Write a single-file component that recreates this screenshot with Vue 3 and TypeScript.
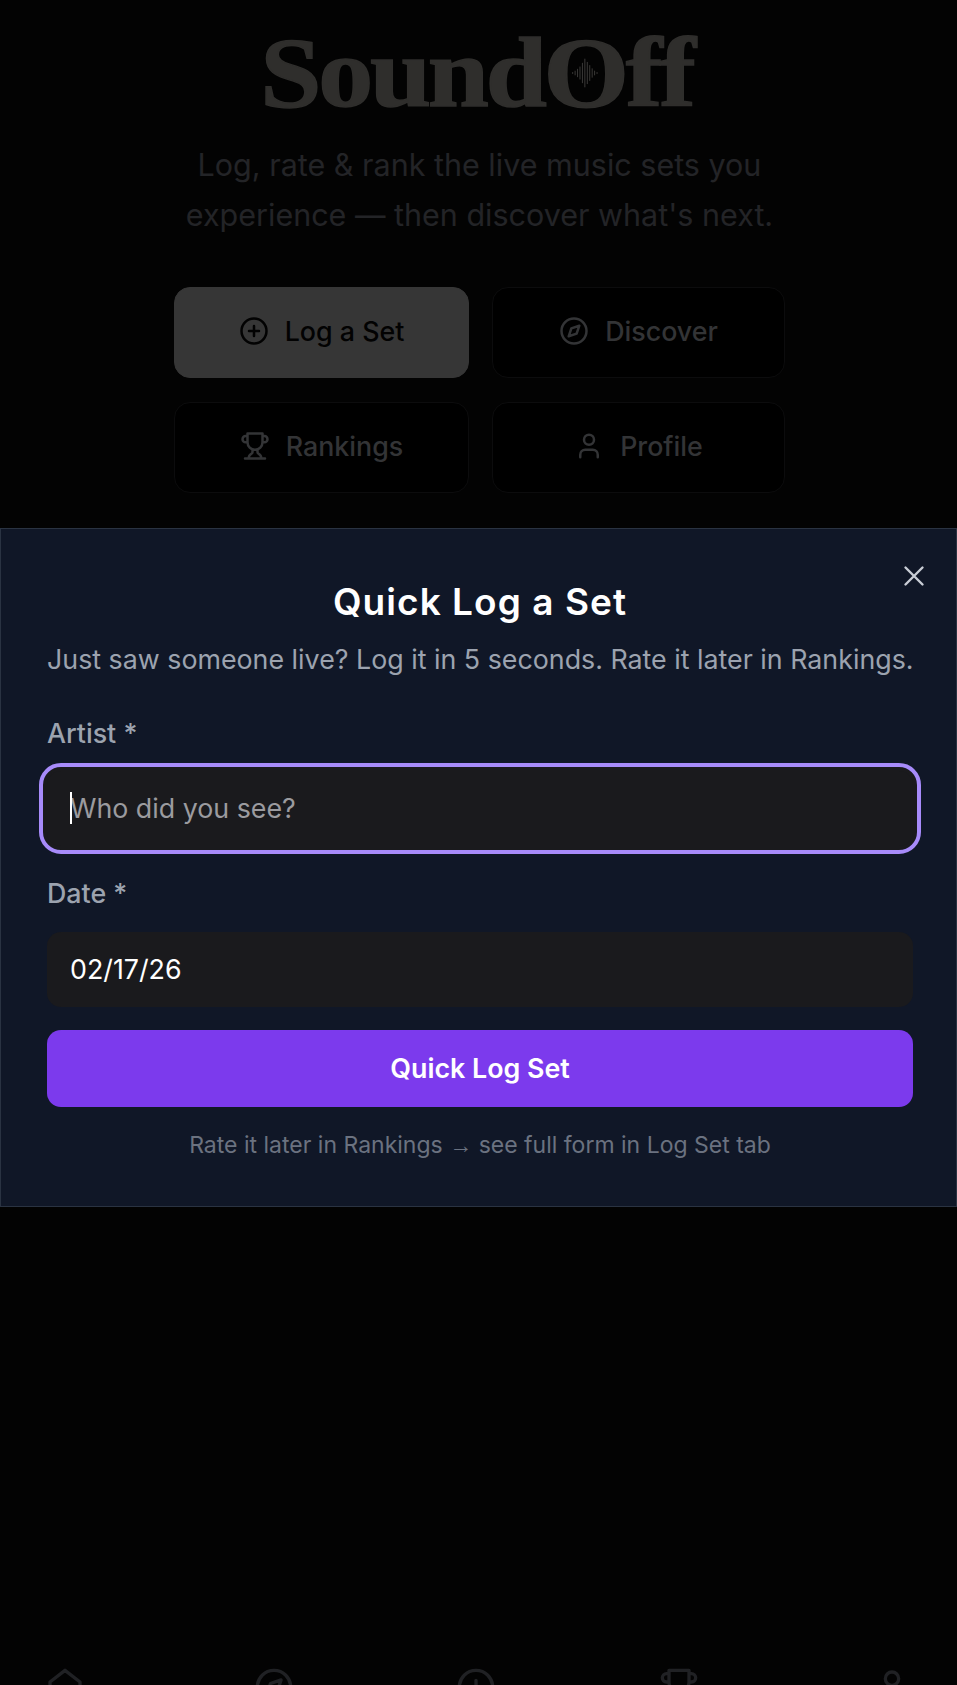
<script setup lang="ts">
import { ref } from "vue";

interface HomeAction {
  id: string;
  label: string;
  primary?: boolean;
}

const actions: HomeAction[] = [
  { id: "log", label: "Log a Set", primary: true },
  { id: "discover", label: "Discover" },
  { id: "rankings", label: "Rankings" },
  { id: "profile", label: "Profile" },
];

const navItems = ["home", "discover", "log", "rankings", "profile"];

const artist = ref("");
const date = ref("02/17/26");

const waveBars = [2, 5, 9, 14, 22, 31, 24, 17, 10, 5, 2];
</script>

<template>
  <div class="page">
    <header class="hero">
      <h1 class="logo">
        <span class="logo-text">Sound<span class="logo-o">O<svg class="wave" viewBox="0 0 26 32" aria-hidden="true">
          <rect
            v-for="(h, i) in waveBars"
            :key="i"
            :x="0.5 + i * 2.4"
            :y="16 - h / 2"
            width="1"
            :height="h"
          />
        </svg></span>ff</span>
      </h1>
      <p class="tagline">Log, rate &amp; rank the live music sets you<br />experience — then discover what's next.</p>
    </header>

    <div class="actions">
      <button
        v-for="a in actions"
        :key="a.id"
        type="button"
        class="action"
        :class="{ 'is-primary': a.primary }"
      >
        <svg class="action-icon" viewBox="0 0 24 24" fill="none" stroke="currentColor" stroke-width="2" stroke-linecap="round" stroke-linejoin="round">
          <template v-if="a.id === 'log'">
            <circle cx="12" cy="12" r="10" />
            <path d="M12 8v8M8 12h8" />
          </template>
          <template v-else-if="a.id === 'discover'">
            <circle cx="12" cy="12" r="10" />
            <path d="M16.24 7.76l-2.12 6.36-6.36 2.12 2.12-6.36z" />
          </template>
          <template v-else-if="a.id === 'rankings'">
            <path d="M6 9H4.5a2.5 2.5 0 0 1 0-5H6M18 9h1.5a2.5 2.5 0 0 0 0-5H18M4 22h16M10 14.66V17c0 .55-.47.98-.97 1.21C7.85 18.75 7 20.24 7 22M14 14.66V17c0 .55.47.98.97 1.21C16.15 18.75 17 20.24 17 22M18 2H6v7a6 6 0 0 0 12 0V2z" />
          </template>
          <template v-else>
            <path d="M19 21v-2a4 4 0 0 0-4-4H9a4 4 0 0 0-4 4v2" />
            <circle cx="12" cy="7" r="4" />
          </template>
        </svg>
        <span>{{ a.label }}</span>
      </button>
    </div>

    <section class="modal" role="dialog" aria-label="Quick Log a Set">
      <button type="button" class="close" aria-label="Close">
        <svg viewBox="0 0 24 24" fill="none" stroke="currentColor" stroke-width="1.7" stroke-linecap="round">
          <path d="M18 6L6 18M6 6l12 12" />
        </svg>
      </button>
      <h2 class="modal-title">Quick Log a Set</h2>
      <p class="modal-sub">Just saw someone live? Log it in 5 seconds. Rate it later in Rankings.</p>

      <label class="field-label" for="artist">Artist *</label>
      <div class="input-wrap is-focus">
        <span class="caret"></span>
        <input id="artist" v-model="artist" class="field" placeholder="Who did you see?" />
      </div>

      <label class="field-label" for="date">Date *</label>
      <div class="input-wrap">
        <input id="date" v-model="date" class="field" />
      </div>

      <button type="button" class="submit">Quick Log Set</button>
      <p class="hint">Rate it later in Rankings <span class="arrow">→</span> see full form in Log Set tab</p>
    </section>

    <nav class="bottom-nav">
      <svg
        v-for="item in navItems"
        :key="item"
        class="nav-icon"
        viewBox="0 0 24 24"
        fill="none"
        stroke="currentColor"
        stroke-width="2"
        stroke-linecap="round"
        stroke-linejoin="round"
      >
        <path v-if="item === 'home'" d="M3 9l9-7 9 7v11a2 2 0 0 1-2 2H5a2 2 0 0 1-2-2z" />
        <template v-else-if="item === 'discover'">
          <circle cx="12" cy="12" r="10" />
          <path d="M16.24 7.76l-2.12 6.36-6.36 2.12 2.12-6.36z" />
        </template>
        <template v-else-if="item === 'log'">
          <circle cx="12" cy="12" r="10" />
          <path d="M12 8v8M8 12h8" />
        </template>
        <path v-else-if="item === 'rankings'" d="M6 9H4.5a2.5 2.5 0 0 1 0-5H6M18 9h1.5a2.5 2.5 0 0 0 0-5H18M18 2H6v7a6 6 0 0 0 12 0V2z" />
        <circle v-else cx="12" cy="7" r="4" />
      </svg>
    </nav>
  </div>
</template>

<style>
html,
body {
  background: #030303;
}
</style>

<style scoped>
.page {
  position: relative;
  width: 957px;
  height: 1685px;
  overflow: hidden;
  background: #030303;
  font-family: Inter, "Liberation Sans", sans-serif;
}

.hero {
  padding-top: 22px;
  text-align: center;
}

.logo {
  margin: 0;
  height: 102px;
  font-family: "Liberation Serif", serif;
  font-size: 100px;
  line-height: 102px;
  font-weight: 700;
  letter-spacing: -3px;
  color: #2f2e2c;
  -webkit-text-stroke: 1.5px #2f2e2c;
}

.logo-text {
  display: inline-block;
  margin-right: 4px;
  transform: scaleX(1.1);
}

.logo-o {
  position: relative;
}

.wave {
  position: absolute;
  left: 50%;
  top: 50%;
  width: 24px;
  height: 32px;
  transform: translate(-50%, -50%);
  fill: #3a3937;
  stroke: none;
}

.tagline {
  margin: 16px 0 0;
  padding-left: 2px;
  font-size: 30.5px;
  line-height: 50px;
  color: #232427;
}

.actions {
  display: grid;
  grid-template-columns: 295px 293px;
  gap: 24px 23px;
  justify-content: start;
  margin: 47px 0 0 174px;
}

.action {
  height: 91px;
  display: flex;
  align-items: center;
  justify-content: center;
  gap: 16px;
  padding: 0 0 3px;
  border: 1px solid #0c0c0d;
  border-radius: 16px;
  background: #000;
  color: #333436;
  font-family: inherit;
  font-size: 26.8px;
  font-weight: 550;
}

.action.is-primary {
  border-color: #363636;
  background: #363636;
  color: #020202;
}

.action-icon {
  width: 30px;
  height: 30px;
}

.modal {
  position: absolute;
  left: 0;
  right: 0;
  top: 528px;
  height: 679px;
  box-sizing: border-box;
  padding: 51px 43px 0 46px;
  border: 1px solid #2a3342;
  background: #101727;
}

.close {
  position: absolute;
  top: 30px;
  right: 25px;
  width: 34px;
  height: 34px;
  padding: 0;
  border: 0;
  background: transparent;
  color: #c9ced6;
}

.close svg {
  display: block;
  width: 100%;
  height: 100%;
}

.modal-title {
  margin: 0;
  height: 44px;
  text-align: center;
  font-size: 37px;
  line-height: 44px;
  font-weight: 600;
  letter-spacing: 1.05px;
  color: #fff;
}

.modal-sub {
  margin: 15px 0 0;
  font-size: 26.8px;
  line-height: 40px;
  color: #9ca3af;
  white-space: nowrap;
}

.field-label {
  display: block;
  margin-top: 34px;
  font-size: 26.8px;
  line-height: 40px;
  font-weight: 500;
  color: #9ca3af;
}

.input-wrap {
  position: relative;
  height: 75px;
  margin-top: 18px;
  border-radius: 14px;
  background: #1a1a1d;
}

.input-wrap + .field-label {
  margin-top: 27px;
}

.input-wrap + .field-label + .input-wrap {
  margin-top: 19px;
}

.input-wrap.is-focus {
  outline: 4px solid #a78bfa;
  outline-offset: 4px;
  box-shadow: 0 0 0 4px #1a1a1d;
}

.caret {
  position: absolute;
  left: 23px;
  top: 21px;
  width: 2px;
  height: 32px;
  background: #fff;
}

.field {
  width: 100%;
  height: 100%;
  box-sizing: border-box;
  padding: 0 23px 2px;
  border: 0;
  outline: 0;
  background: transparent;
  color: #fff;
  font-family: inherit;
  font-size: 26.8px;
}

.field::placeholder {
  color: #9b9b9f;
  opacity: 1;
}

.submit {
  display: block;
  width: 100%;
  height: 77px;
  margin-top: 23px;
  padding: 0 0 2px;
  border: 0;
  border-radius: 14px;
  background: #7c3aed;
  color: #fff;
  font-family: inherit;
  font-size: 26.8px;
  font-weight: 600;
}

.hint {
  margin: 21px 0 0;
  text-align: center;
  font-size: 23px;
  line-height: 34px;
  color: #6b7280;
}

.arrow {
  font-family: "Liberation Sans", sans-serif;
}

.bottom-nav {
  position: absolute;
  left: 45px;
  top: 1667px;
  display: grid;
  grid-template-columns: 209px 202px 203px 213px 40px;
  color: #202124;
}

.nav-icon {
  width: 40px;
  height: 40px;
}
</style>
